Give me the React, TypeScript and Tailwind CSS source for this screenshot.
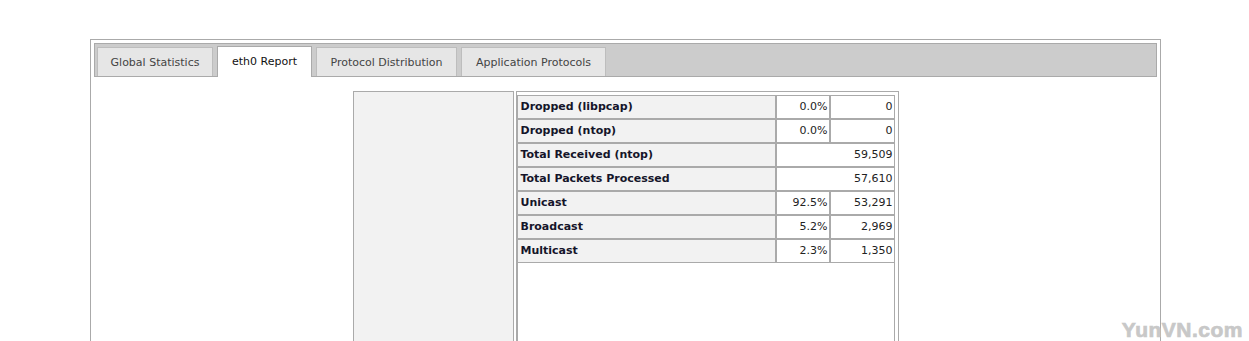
import React from 'react'

interface Row {
  label: string
  pct?: string
  value: string
}

const TABS = [
  { name: 'Global Statistics', width: 'w-[116px]' },
  { name: 'eth0 Report', width: 'w-[95px]', active: true },
  { name: 'Protocol Distribution', width: 'w-[141px]' },
  { name: 'Application Protocols', width: 'w-[145px]' }
]

const ROWS: Row[] = [
  { label: 'Dropped (libpcap)', pct: '0.0%', value: '0' },
  { label: 'Dropped (ntop)', pct: '0.0%', value: '0' },
  { label: 'Total Received (ntop)', value: '59,509' },
  { label: 'Total Packets Processed', value: '57,610' },
  { label: 'Unicast', pct: '92.5%', value: '53,291' },
  { label: 'Broadcast', pct: '5.2%', value: '2,969' },
  { label: 'Multicast', pct: '2.3%', value: '1,350' }
]

export default function App() {
  return (
    <div className="relative h-[341px] overflow-hidden bg-white font-['DejaVu_Sans',sans-serif] text-[11px]">
      {/* Outer frame */}
      <div className="ml-[90px] mt-[39px] w-[1071px] h-[400px] border border-[#aaa] p-[3px]">
        {/* Tab bar */}
        <div className="flex items-end gap-[4px] h-[34px] border border-[#aaa] bg-[#cccccc] pl-[2px]">
          {TABS.map((tab) =>
            tab.active ? (
              <div
                key={tab.name}
                className={`${tab.width} h-[31px] -mb-[1px] pt-[1px] flex items-center justify-center bg-white border border-b-0 border-[#aaa] text-[#111]`}
              >
                {tab.name}
              </div>
            ) : (
              <div
                key={tab.name}
                className={`${tab.width} h-[29px] pt-[2px] flex items-center justify-center bg-[#e6e6e6] border-l border-t border-r border-[#bdbdbd] text-[#444]`}
              >
                {tab.name}
              </div>
            )
          )}
        </div>

        {/* Report table */}
        <div className="flex gap-[2px] w-[546px] mx-auto mt-[14px]">
          <div className="w-[161px] h-[300px] border border-[#aaa] bg-[#f2f2f2]" />
          <div className="w-[383px] h-[300px] border border-[#aaa] pt-[3px] pr-[3px]">
            {ROWS.map((row) => (
              <div key={row.label} className="flex h-[24px]">
                <div className="w-[259px] flex items-center pl-[3px] border border-[#aaa] bg-[#f2f2f2] font-bold text-[#15152a]">
                  {row.label}
                </div>
                {row.pct ? (
                  <>
                    <div className="w-[54px] flex items-center justify-end pr-[1px] border border-[#aaa] text-[#222]">
                      {row.pct}
                    </div>
                    <div className="w-[65px] flex items-center justify-end pr-[1px] border border-[#aaa] text-[#222]">
                      {row.value}
                    </div>
                  </>
                ) : (
                  <div className="w-[119px] flex items-center justify-end pr-[1px] border border-[#aaa] text-[#222]">
                    {row.value}
                  </div>
                )}
              </div>
            ))}
            <div className="w-[378px] h-[200px] border-l border-r border-[#aaa]" />
          </div>
        </div>
      </div>

      {/* Watermark */}
      <div className="absolute right-[6px] top-[314px] font-['Liberation_Sans',sans-serif] font-bold text-[21px] tracking-[0.5px] text-[#c8c8c8] [-webkit-text-stroke:0.7px_#c8c8c8]">
        YunVN.com
      </div>
    </div>
  )
}
